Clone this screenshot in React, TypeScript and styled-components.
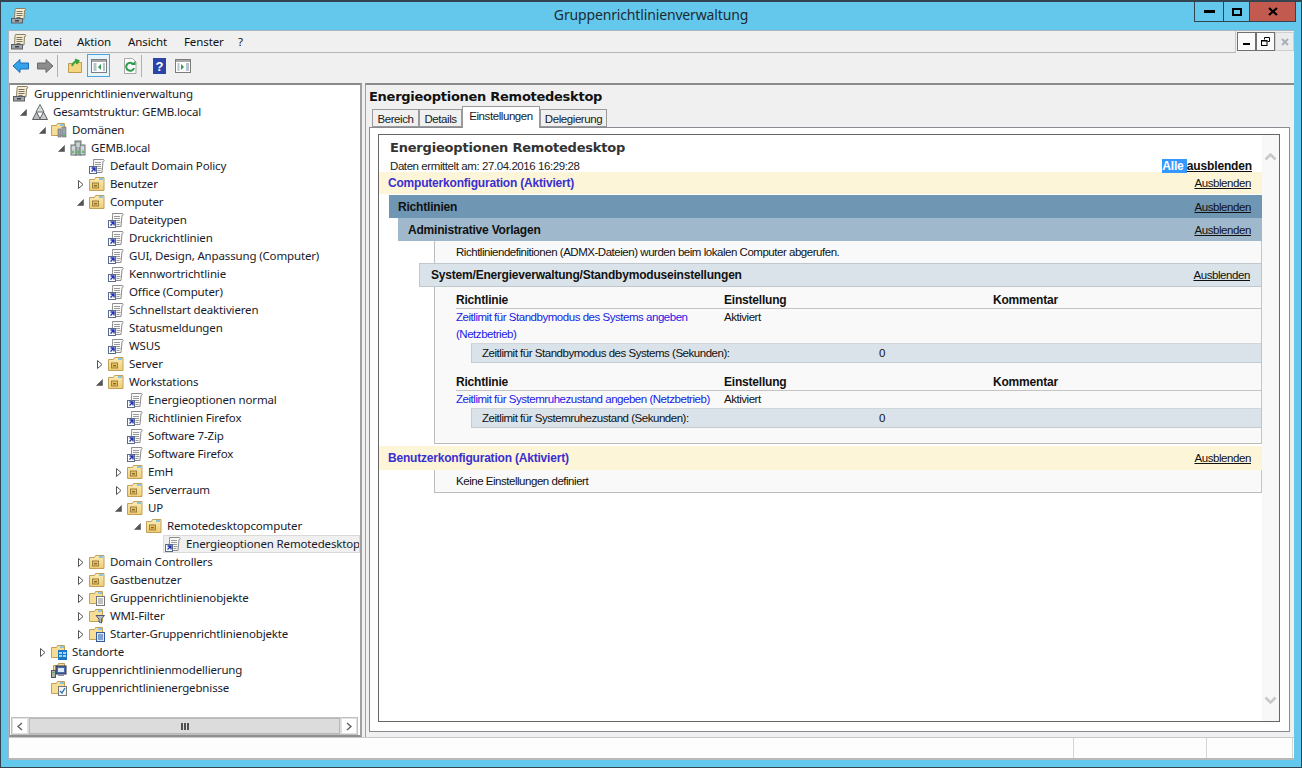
import React from "react";
import styled, { createGlobalStyle } from "styled-components";

const Global = createGlobalStyle`
  html, body { margin: 0; padding: 0; height: 768px; overflow: hidden; background: #63c8eb; }
  * { box-sizing: border-box; }
`;

const UI = `"Noto Sans", "Open Sans", sans-serif`;
const REPORT = `"Liberation Sans", Arial, sans-serif`;

const Window = styled.div`
  width: 1302px; height: 768px; background: #63c8eb; border: 1px solid #33434f; border-top-width: 2px;
  display: flex; flex-direction: column; padding: 0 7px 7px; font-family: ${UI}; color: #000;
`;
const TitleBar = styled.div`
  height: 28px; margin: 0 -7px; padding: 0 5px 0 4px; display: flex; position: relative; flex: none;
`;
const TitleIcon = styled.div` margin-top: 6px; width: 16px; height: 16px; margin-left: 6px; `;
const TitleText = styled.div`
  position: absolute; left: 0; right: 0; top: 3px; text-align: center;
  font-size: 14px; line-height: 20px; color: #1d2b33; letter-spacing: -0.15px;
`;
const Controls = styled.div` margin-left: auto; display: flex; height: 20px; border: 1px solid #33434f; border-top: 0; `;
const Ctl = styled.div<{ $w: number; $close?: boolean }>`
  width: ${(p) => p.$w}px; display: flex; align-items: center; justify-content: center;
  background: ${(p) => (p.$close ? "#c35a50" : "transparent")};
  & + & { border-left: 1px solid #33434f; }
`;
const Client = styled.div` flex: 1; background: #f0f0f0; display: flex; flex-direction: column; min-height: 0; border: 1px solid #a9b6bf; border-bottom: 0; border-right: 0; `;
const MenuRow = styled.div` height: 22px; display: flex; align-items: center; flex: none; `;
const MenuBar = styled.div`
  flex: 1; height: 22px; display: flex; align-items: center; font-size: 11.5px; padding-left: 2px; border-bottom: 1px solid #b4b4bb;
  border-right: 1px solid #c8c8cc; letter-spacing: -0.1px;
`;
const MenuIcon = styled.div` width: 16px; height: 16px; margin-right: 7px; `;
const MenuItem = styled.span<{ $w: number }>` width: ${(p) => p.$w}px; line-height: 16px; color: #101010; `;
const MdiButtons = styled.div` display: flex; padding: 1px 0 0 1px; height: 22px; width: 58px; `;
const MdiBtn = styled.div<{ $dis?: boolean }>`
  width: 19px; height: 19px; background: ${(p) => (p.$dis ? "#ececec" : "#fafafa")}; border: 1px solid ${(p) => (p.$dis ? "#d0d0d0" : "#707070")};
  display: flex; align-items: center; justify-content: center;
`;
const Toolbar = styled.div` height: 30px; flex: none; display: flex; align-items: center; padding-bottom: 5px; `;
const ToolBtn = styled.div<{ $w: number; $ml?: number; $active?: boolean }>`
  width: ${(p) => p.$w}px; height: 23px; margin-left: ${(p) => p.$ml ?? 0}px; display: flex; align-items: center; justify-content: center; flex: none;
  ${(p) => (p.$active ? "background: #e5f3fb; border: 1px solid #4aa5db;" : "")}
`;
const ToolSep = styled.div<{ $ml: number }>` width: 1px; height: 22px; background: #b0b0b0; margin-left: ${(p) => p.$ml}px; flex: none; `;
const Panes = styled.div` flex: 1; display: flex; min-height: 0; `;
const TreePane = styled.div`
  width: 353px; flex: none; background: #fff; border-top: 2px solid #8a8a8a; border-right: 2px solid #a0a0a0; border-left: 1px solid #a0a0a0;
  border-bottom: 2px solid #909090;
  display: flex; flex-direction: column; min-height: 0;
`;
const Tree = styled.div` flex: 1; padding-top: 0; overflow: hidden; font-size: 11.5px; `;
const Row = styled.div<{ $depth: number }>`
  height: 18px; display: flex; align-items: center; padding-left: ${(p) => 3 + p.$depth * 19}px; white-space: nowrap; color: #1a1a2a;
`;
const Toggle = styled.div` width: 14px; margin-left: -14px; height: 18px; display: flex; align-items: center; `;
const Node = styled.div<{ $sel?: boolean }>`
  display: flex; align-items: center; height: 18px;
  ${(p) => (p.$sel ? "flex: 1; margin: 0 1px 0 -2px; padding-left: 2px; background: #f0f0f0; outline: 1px solid #dadada; outline-offset: -1px;" : "flex: none;")}
`;
const NodeIcon = styled.div` width: 16px; height: 16px; margin-right: 5px; flex: none; `;
const NodeLabel = styled.span` line-height: 18px; letter-spacing: -0.15px; `;
const HScroll = styled.div` height: 18px; display: flex; margin: 0 2px 0 1px; gap: 1px; flex: none; border: 1px solid #c0c0c0; background: #dcdcdc; `;
const HBtn = styled.div` width: 16px; background: #fff; display: flex; align-items: center; justify-content: center; border: 1px solid #e0e0e0; `;
const HThumb = styled.div` flex: 1; background: #dcdcdc; border: 1px solid #b8b8b8; display: flex; align-items: center; justify-content: center; `;
const Right = styled.div` flex: 1; margin-left: 3px; display: flex; flex-direction: column; border-top: 2px solid #8a8a8a; border-left: 1px solid #a0a0a0; min-width: 0; `;
const RightTitle = styled.div`
  height: 22px; padding: 2px 0 0 3px; flex: none; font: bold 13px/20px "DejaVu Sans", Verdana, sans-serif; color: #111; letter-spacing: -0.27px;
`;
const Tabs = styled.div` display: flex; height: 20px; padding-left: 6px; flex: none; font: 11.5px/17px ${REPORT}; letter-spacing: -0.42px; position: relative; z-index: 1; `;
const Tab = styled.div<{ $on?: boolean; $w: number }>`
  width: ${(p) => p.$w}px; text-align: center;
  height: ${(p) => (p.$on ? 22 : 18)}px; margin-top: ${(p) => (p.$on ? -1 : 2)}px; border: 1px solid #9a9a9a; border-bottom: ${(p) => (p.$on ? "0" : "1px solid #9a9a9a")};
  background: ${(p) => (p.$on ? "#fff" : "#f0f0f0")};
  color: #1a1a1a; padding-top: 1px; white-space: nowrap;
`;
const TabPage = styled.div`
  margin: 0 4px 5px 3px; flex: 1; min-height: 0; border: 1px solid #8a8a92; background: #fff; padding: 6px 9px 9px 8px; display: flex;
`;
const ReportBox = styled.div` flex: 1; border: 1px solid #666; display: flex; min-width: 0; background: #fff; `;
const Report = styled.div` flex: 1; min-width: 0; font: 11.5px/16px ${REPORT}; letter-spacing: -0.47px; color: #111; `;
const RHead = styled.div` padding: 4px 10px 0 11px; height: 37px; position: relative; `;
const RTitle = styled.div` font: bold 13px/18px "DejaVu Sans", Verdana, sans-serif; color: #333; letter-spacing: -0.2px; `;
const RDate = styled.div` line-height: 16px; margin-top: 1px; color: #222; letter-spacing: -0.42px; `;
const HideAll = styled.div` position: absolute; right: 10px; top: 24px; font-size: 12px; font-weight: bold; line-height: 14px; letter-spacing: -0.15px; `;
const Sel = styled.span` background: #3399ff; color: #fff; `;
const U = styled.span` text-decoration: underline; `;
const Band = styled.div<{ $bg: string; $ml: number; $pl: number; $h: number; $mt?: number; $line?: string }>`
  display: flex; align-items: center; justify-content: space-between; height: ${(p) => p.$h}px; margin-top: ${(p) => p.$mt ?? 0}px;
  margin-left: ${(p) => p.$ml}px; padding: 0 11px 0 ${(p) => p.$pl}px; background: ${(p) => p.$bg};
  ${(p) => (p.$line ? `border: 1px solid ${p.$line}; border-right: 0;` : "")}
`;
const BandTitle = styled.span<{ $color?: string }>` font-size: 12px; font-weight: bold; letter-spacing: -0.2px; color: ${(p) => p.$color ?? "#111"}; `;
const HideLink = styled.span` text-decoration: underline; letter-spacing: -0.42px; `;
const Content = styled.div<{ $h: number }>`
  margin-left: 55px; height: ${(p) => p.$h}px; background: #f9f9f9; border-left: 1px solid #bcbcbc; border-right: 1px solid #c4c4c4; border-bottom: 1px solid #bcbcbc; padding-left: 21px;
`;
const Note = styled.div` height: 22px; line-height: 22px; `;
const SubBandWrap = styled.div` margin-left: -37px; `;
const Tbl = styled.div<{ $mt: number }>` margin-top: ${(p) => p.$mt}px; `;
const HeadRow = styled.div`
  display: grid; grid-template-columns: 268px 269px 1fr; height: 17px; font-size: 12px; font-weight: bold; letter-spacing: -0.2px; line-height: 16px; border-bottom: 1px solid #c4c4c4;
`;
const DataRow = styled.div` display: grid; grid-template-columns: 268px 1fr; line-height: 17px; `;
const PolicyLink = styled.span` color: #1a1ae6; `;
const SubRow = styled.div`
  margin-left: 15px; height: 20px; background: #dae3ea; border-left: 1px solid #c4ccd2; border-bottom: 1px solid #c4ccd2; border-top: 1px solid #d0d6da;
  display: grid; grid-template-columns: 397px 1fr; padding-left: 10px; line-height: 18px;
`;
const VScroll = styled.div`
  width: 17px; background: #f8f8f8; display: flex; flex-direction: column; justify-content: space-between; align-items: center; padding: 17px 0 16px;
`;
const Status = styled.div` height: 23px; flex: none; background: #fdfdfd; border-top: 1px solid #c8c8c8; border-bottom: 2px solid #b8b8b8; display: flex; justify-content: flex-end; `;
const StatusCell = styled.div<{ $w: number }>` width: ${(p) => p.$w}px; border-left: 1px solid #d6d6d6; `;

const S = styled.svg` display: block; `;

const Scroll = () => (
  <S width="16" height="16" viewBox="0 0 16 16">
    <path d="M4.5 .5h9.5c1 0 1 2 0 2H13.5L13 11H3.5L4 3c0-1 .5-2.5 .5-2.5z" fill="#f5ecd0" stroke="#8a7f60" />
    <path d="M5.5 3.5h6M5.5 5.5h6M5.5 7.5h6M5.5 9.5h4" stroke="#7a7464" />
    <rect x="0.5" y="10.5" width="11" height="4.5" fill="#a0a6aa" stroke="#5b6167" />
    <rect x="4" y="12" width="4" height="1.5" fill="#3c4248" />
  </S>
);
const Gpo = () => (
  <S width="16" height="16" viewBox="0 0 16 16">
    <path d="M4.5 1.5h10c1 0 .8 2 0 2H14L13 14.5H4L4.6 3.5z" fill="#fafafa" stroke="#8c8c8c" />
    <path d="M6 4.5h6M6 6.5h6M6 8.5h6M8.5 10.5h4M8.5 12.5h3" stroke="#9a9a9a" />
    <rect x="0.5" y="8.5" width="7" height="7" fill="#fff" stroke="#5a6a8a" />
    <path d="M2.5 10l3.5 0v3.5M5.5 10.5L2.5 13.5" stroke="#2030b0" strokeWidth="1.4" fill="none" />
  </S>
);
const Ou = () => (
  <S width="16" height="16" viewBox="0 0 16 16">
    <defs>
      <linearGradient id="ouFill" x1="0" y1="0" x2="0" y2="1">
        <stop offset="0" stopColor="#fbecb8" />
        <stop offset="1" stopColor="#f0cc72" />
      </linearGradient>
    </defs>
    <path d="M.5 3.5h5l1-2h8.5v13H.5z" fill="url(#ouFill)" stroke="#c2a05a" />
    <rect x="10" y="2" width="4" height="2" fill="#8cc4e0" />
    <rect x="3.5" y="7" width="6" height="5" fill="#e8c060" stroke="#9a8040" />
    <rect x="5" y="9" width="3" height="1.4" fill="#8a6a20" />
  </S>
);
const Folder = ({ badge }: { badge?: string }) => (
  <S width="16" height="16" viewBox="0 0 16 16">
    <path d="M.5 3.5h5l1-2h7v12H.5z" fill="#f7de96" stroke="#c2a05a" />
    <rect x="9" y="2" width="4" height="2" fill="#8cc4e0" />
    {badge === "gpo" && <><rect x="7.5" y="6.5" width="8" height="9" fill="#fafafa" stroke="#777" /><path d="M9 9h5M9 11h5M9 13h5" stroke="#888" /></>}
    {badge === "filter" && <><path d="M7 7.5h8.5l-3 3.5v4l-2.5-1v-3z" fill="#b0bccc" stroke="#556" /></>}
    {badge === "starter" && <><rect x="7.5" y="6.5" width="8" height="9" fill="#dce8f8" stroke="#345a9a" /><path d="M9 9h5M9 11h5M9 13h5" stroke="#2a5aa8" /></>}
    {badge === "site" && <><rect x="7" y="6" width="9" height="10" fill="#1a78c8" /><path d="M8 8h3v2H8zM12 8h3v2h-3zM8 11h3v2H8zM12 11h3v2h-3z" fill="#a8d8f4" /></>}
    {badge === "result" && <><rect x="7.5" y="6.5" width="8" height="9" fill="#f4f4f4" stroke="#777" /><path d="M9 11l2 2 3-5" stroke="#2a70b0" fill="none" strokeWidth="1.3" /></>}
    {badge === "domains" && <><rect x="7" y="7" width="3" height="8" fill="#9aa6a8" stroke="#667" strokeWidth=".6" /><rect x="11" y="5" width="4" height="10" fill="#9aa6a8" stroke="#667" strokeWidth=".6" /><path d="M8 13h1M12 13h2" stroke="#30c040" /></>}
  </S>
);
const Forest = () => (
  <S width="16" height="16" viewBox="0 0 16 16">
    <path d="M8 0.5l4 7.5h-8z" fill="#d8dcdc" stroke="#6a6e70" />
    <path d="M4.5 8L8.5 15.5H.5z" fill="#b8bcbe" stroke="#5a5e60" />
    <path d="M11.5 8L15.5 15.5H7.5z" fill="#c8cccc" stroke="#5a5e60" />
  </S>
);
const Domain = () => (
  <S width="16" height="16" viewBox="0 0 16 16">
    <rect x="5" y="1" width="6" height="14" fill="#aab4b4" stroke="#6a7474" />
    <rect x="1" y="5" width="5" height="10" fill="#c4cccc" stroke="#6a7474" />
    <rect x="10" y="5" width="5" height="10" fill="#c4cccc" stroke="#6a7474" />
    <path d="M6 4h4M6 6h4M2 8h3M11 8h3" stroke="#e8eeee" />
    <path d="M2 12h2M7 12h2M12 12h2" stroke="#32c63c" strokeWidth="1.6" />
  </S>
);
const Modeling = () => (
  <S width="16" height="16" viewBox="0 0 16 16">
    <path d="M2.5 3.5h4l1-2h6v8h-11z" fill="#f3dc9c" stroke="#b89a58" />
    <rect x="5" y="4" width="10" height="8" fill="#4a6cb0" stroke="#334" />
    <rect x="7" y="6" width="6" height="4" fill="#dde8f6" />
    <rect x="0.5" y="8.5" width="4" height="7" fill="#a8b0a8" stroke="#555" />
    <path d="M1.5 10.5h2" stroke="#30c040" />
    <rect x="7" y="12" width="6" height="2" fill="#8a90a0" />
  </S>
);

const ArrowOpen = () => (
  <S width="14" height="18" viewBox="0 0 14 18"><path d="M8.5 6.5v6h-6z" fill="#555" stroke="#555" strokeWidth=".6" /></S>
);
const ArrowClosed = () => (
  <S width="14" height="18" viewBox="0 0 14 18"><path d="M3.5 5.5l4.5 4-4.5 4z" fill="#fff" stroke="#555" /></S>
);

type N = { t: string; d: number; i: React.ReactNode; a?: "o" | "c"; sel?: boolean };
const g = <Gpo />, ou = <Ou />;
const rows: N[] = [
  { t: "Gruppenrichtlinienverwaltung", d: 0, i: <Scroll /> },
  { t: "Gesamtstruktur: GEMB.local", d: 1, i: <Forest />, a: "o" },
  { t: "Domänen", d: 2, i: <Folder badge="domains" />, a: "o" },
  { t: "GEMB.local", d: 3, i: <Domain />, a: "o" },
  { t: "Default Domain Policy", d: 4, i: g },
  { t: "Benutzer", d: 4, i: ou, a: "c" },
  { t: "Computer", d: 4, i: ou, a: "o" },
  { t: "Dateitypen", d: 5, i: g },
  { t: "Druckrichtlinien", d: 5, i: g },
  { t: "GUI, Design, Anpassung (Computer)", d: 5, i: g },
  { t: "Kennwortrichtlinie", d: 5, i: g },
  { t: "Office (Computer)", d: 5, i: g },
  { t: "Schnellstart deaktivieren", d: 5, i: g },
  { t: "Statusmeldungen", d: 5, i: g },
  { t: "WSUS", d: 5, i: g },
  { t: "Server", d: 5, i: ou, a: "c" },
  { t: "Workstations", d: 5, i: ou, a: "o" },
  { t: "Energieoptionen normal", d: 6, i: g },
  { t: "Richtlinien Firefox", d: 6, i: g },
  { t: "Software 7-Zip", d: 6, i: g },
  { t: "Software Firefox", d: 6, i: g },
  { t: "EmH", d: 6, i: ou, a: "c" },
  { t: "Serverraum", d: 6, i: ou, a: "c" },
  { t: "UP", d: 6, i: ou, a: "o" },
  { t: "Remotedesktopcomputer", d: 7, i: ou, a: "o" },
  { t: "Energieoptionen Remotedesktop", d: 8, i: g, sel: true },
  { t: "Domain Controllers", d: 4, i: ou, a: "c" },
  { t: "Gastbenutzer", d: 4, i: ou, a: "c" },
  { t: "Gruppenrichtlinienobjekte", d: 4, i: <Folder badge="gpo" />, a: "c" },
  { t: "WMI-Filter", d: 4, i: <Folder badge="filter" />, a: "c" },
  { t: "Starter-Gruppenrichtlinienobjekte", d: 4, i: <Folder badge="starter" />, a: "c" },
  { t: "Standorte", d: 2, i: <Folder badge="site" />, a: "c" },
  { t: "Gruppenrichtlinienmodellierung", d: 2, i: <Modeling /> },
  { t: "Gruppenrichtlinienergebnisse", d: 2, i: <Folder badge="result" /> },
];

const Chevron = ({ up }: { up?: boolean }) => (
  <S width="13" height="9" viewBox="0 0 13 9">
    <path d={up ? "M1.5 7.5l5-5 5 5" : "M1.5 1.5l5 5 5-5"} fill="none" stroke="#c8c8c8" strokeWidth="2.6" />
  </S>
);

function App() {
  return (
    <>
      <Global />
      <Window>
        <TitleBar>
          <TitleIcon><Scroll /></TitleIcon>
          <TitleText>Gruppenrichtlinienverwaltung</TitleText>
          <Controls>
            <Ctl $w={28}><S width="11" height="3"><rect width="11" height="3" fill="#000" /></S></Ctl>
            <Ctl $w={26}><S width="10" height="8"><rect x="1" y="1" width="8" height="6" fill="none" stroke="#000" strokeWidth="2" /></S></Ctl>
            <Ctl $w={46} $close><S width="10" height="9" viewBox="0 0 10 9"><path d="M1 1l8 7M9 1L1 8" stroke="#000" strokeWidth="2.2" /></S></Ctl>
          </Controls>
        </TitleBar>
        <Client>
          <MenuRow>
            <MenuBar>
              <MenuIcon><Scroll /></MenuIcon>
              <MenuItem $w={43}>Datei</MenuItem>
              <MenuItem $w={51}>Aktion</MenuItem>
              <MenuItem $w={56}>Ansicht</MenuItem>
              <MenuItem $w={54}>Fenster</MenuItem>
              <MenuItem $w={20}>?</MenuItem>
            </MenuBar>
            <MdiButtons>
              <MdiBtn><S width="7" height="9"><rect y="6" width="7" height="2" fill="#000" /></S></MdiBtn>
              <MdiBtn><S width="9" height="9" viewBox="0 0 9 9"><path d="M3.5 2.5v-2h5v4h-2" fill="none" stroke="#000" /><rect x=".5" y="3.5" width="5.5" height="5" fill="none" stroke="#000" /><path d="M1 4h5" stroke="#000" /></S></MdiBtn>
              <MdiBtn $dis><S width="8" height="8" viewBox="0 0 8 8"><path d="M1 1l6 6M7 1L1 7" stroke="#a8b0bc" strokeWidth="2" /></S></MdiBtn>
            </MdiButtons>
          </MenuRow>
          <Toolbar>
            <ToolBtn $w={24}>
              <S width="18" height="16" viewBox="0 0 18 16"><path d="M8 1.5L1 8l7 6.5V11h8.5V5H8z" fill="#36a3e8" stroke="#1a6cb8" /></S>
            </ToolBtn>
            <ToolBtn $w={23}>
              <S width="18" height="16" viewBox="0 0 18 16"><path d="M10 1.5L17 8l-7 6.5V11H1.5V5H10z" fill="#8c8c8c" stroke="#6a6a6a" /></S>
            </ToolBtn>
            <ToolSep $ml={1} />
            <ToolBtn $w={16} $ml={9}>
              <S width="16" height="16" viewBox="0 0 16 16"><path d="M1.5 5.5h5l1-1h7v10h-13z" fill="#f3d77e" stroke="#bb9c52" /><path d="M5 8c1-3 3-4.5 5-5M8 1.5l3.5 1.5-2 3" fill="none" stroke="#3aa03a" strokeWidth="2" /></S>
            </ToolBtn>
            <ToolBtn $w={23} $ml={4} $active>
              <S width="16" height="14" viewBox="0 0 16 14"><rect x=".5" y=".5" width="15" height="13" fill="#fff" stroke="#7c7c7c" /><rect x="1" y="1" width="14" height="2" fill="#a8a8a8" /><path d="M2.5 5h3M2.5 7h3M2.5 9h3M2.5 11h3M12 5h2M12 7h2M12 9h2M12 11h2" stroke="#6a8a9a" /><path d="M10 5v6L7 8z" fill="#2e9c4a" /></S>
            </ToolBtn>
            <ToolBtn $w={14} $ml={13}>
              <S width="14" height="16" viewBox="0 0 14 16"><path d="M1.5.5h8l3.5 3.5v11.5h-11.5z" fill="#fafafa" stroke="#a8a8a8" /><path d="M10.5 6.5A4 4 0 1 0 11 10" fill="none" stroke="#2e9c4a" strokeWidth="2" /><path d="M8 7h4.5V2.8z" fill="#2e9c4a" /></S>
            </ToolBtn>
            <ToolSep $ml={4} />
            <ToolBtn $w={13} $ml={11}>
              <S width="13" height="16" viewBox="0 0 13 16"><rect width="13" height="16" fill="#2a44a8" /><text x="6.5" y="13" textAnchor="middle" fontSize="13" fontWeight="bold" fill="#fff" fontFamily="Liberation Sans">?</text></S>
            </ToolBtn>
            <ToolBtn $w={16} $ml={9}>
              <S width="16" height="14" viewBox="0 0 16 14"><rect x=".5" y=".5" width="15" height="13" fill="#fff" stroke="#7c7c7c" /><rect x="1" y="1" width="14" height="2" fill="#a8a8a8" /><path d="M2.5 5h2M2.5 7h2M2.5 9h2M2.5 11h2M11 5h3M11 7h3M11 9h3M11 11h3" stroke="#6a8a9a" /><path d="M6 5v6l3-3z" fill="#2e9c4a" /></S>
            </ToolBtn>
          </Toolbar>
          <Panes>
            <TreePane>
              <Tree>
                {rows.map((r) => (
                  <Row key={r.t} $depth={r.d}>
                    {r.a && <Toggle>{r.a === "o" ? <ArrowOpen /> : <ArrowClosed />}</Toggle>}
                    <Node $sel={r.sel}>
                      <NodeIcon>{r.i}</NodeIcon>
                      <NodeLabel>{r.t}</NodeLabel>
                    </Node>
                  </Row>
                ))}
              </Tree>
              <HScroll>
                <HBtn><S width="6" height="9" viewBox="0 0 6 9"><path d="M5 1L1 4.5 5 8" fill="none" stroke="#606060" strokeWidth="1.4" /></S></HBtn>
                <HThumb><S width="8" height="7"><path d="M1 0v7M4 0v7M7 0v7" stroke="#505050" strokeWidth="2" /></S></HThumb>
                <HBtn><S width="6" height="9" viewBox="0 0 6 9"><path d="M1 1l4 3.5L1 8" fill="none" stroke="#606060" strokeWidth="1.4" /></S></HBtn>
              </HScroll>
            </TreePane>
            <Right>
              <RightTitle>Energieoptionen Remotedesktop</RightTitle>
              <Tabs>
                <Tab $w={47}>Bereich</Tab>
                <Tab $w={43}>Details</Tab>
                <Tab $w={78} $on>Einstellungen</Tab>
                <Tab $w={67}>Delegierung</Tab>
              </Tabs>
              <TabPage>
                <ReportBox>
                  <Report>
                    <RHead>
                      <RTitle>Energieoptionen Remotedesktop</RTitle>
                      <RDate>Daten ermittelt am: 27.04.2016 16:29:28</RDate>
                      <HideAll><Sel>Alle </Sel><U>ausblenden</U></HideAll>
                    </RHead>
                    <Band $bg="#fdf5d8" $ml={0} $pl={9} $h={22}>
                      <BandTitle $color="#3a2fd0">Computerkonfiguration (Aktiviert)</BandTitle>
                      <HideLink>Ausblenden</HideLink>
                    </Band>
                    <Band $bg="#6f96b3" $ml={10} $pl={9} $h={23} $mt={1}>
                      <BandTitle>Richtlinien</BandTitle>
                      <HideLink>Ausblenden</HideLink>
                    </Band>
                    <Band $bg="#a0b8cb" $ml={19} $pl={10} $h={23}>
                      <BandTitle>Administrative Vorlagen</BandTitle>
                      <HideLink>Ausblenden</HideLink>
                    </Band>
                    <Content $h={203}>
                      <Note>Richtliniendefinitionen (ADMX-Dateien) wurden beim lokalen Computer abgerufen.</Note>
                      <SubBandWrap>
                        <Band $bg="#dae3ea" $ml={0} $pl={11} $h={24} $line="#c0c8ce">
                          <BandTitle>System/Energieverwaltung/Standbymoduseinstellungen</BandTitle>
                          <HideLink>Ausblenden</HideLink>
                        </Band>
                      </SubBandWrap>
                      <Tbl $mt={5}>
                        <HeadRow><span>Richtlinie</span><span>Einstellung</span><span>Kommentar</span></HeadRow>
                        <DataRow>
                          <PolicyLink>Zeitlimit für Standbymodus des Systems angeben<br />(Netzbetrieb)</PolicyLink>
                          <span>Aktiviert</span>
                        </DataRow>
                        <SubRow><span>Zeitlimit für Standbymodus des Systems (Sekunden):</span><span>0</span></SubRow>
                      </Tbl>
                      <Tbl $mt={11}>
                        <HeadRow><span>Richtlinie</span><span>Einstellung</span><span>Kommentar</span></HeadRow>
                        <DataRow>
                          <PolicyLink>Zeitlimit für Systemruhezustand angeben (Netzbetrieb)</PolicyLink>
                          <span>Aktiviert</span>
                        </DataRow>
                        <SubRow><span>Zeitlimit für Systemruhezustand (Sekunden):</span><span>0</span></SubRow>
                      </Tbl>
                    </Content>
                    <Band $bg="#fdf5d8" $ml={0} $pl={9} $h={24} $mt={2}>
                      <BandTitle $color="#3a2fd0">Benutzerkonfiguration (Aktiviert)</BandTitle>
                      <HideLink>Ausblenden</HideLink>
                    </Band>
                    <Content $h={23}>
                      <Note>Keine Einstellungen definiert</Note>
                    </Content>
                  </Report>
                  <VScroll><Chevron up /><Chevron /></VScroll>
                </ReportBox>
              </TabPage>
            </Right>
          </Panes>
          <Status>
            <StatusCell $w={133} />
            <StatusCell $w={86} />
            <StatusCell $w={2} />
          </Status>
        </Client>
      </Window>
    </>
  );
}

export default App;
